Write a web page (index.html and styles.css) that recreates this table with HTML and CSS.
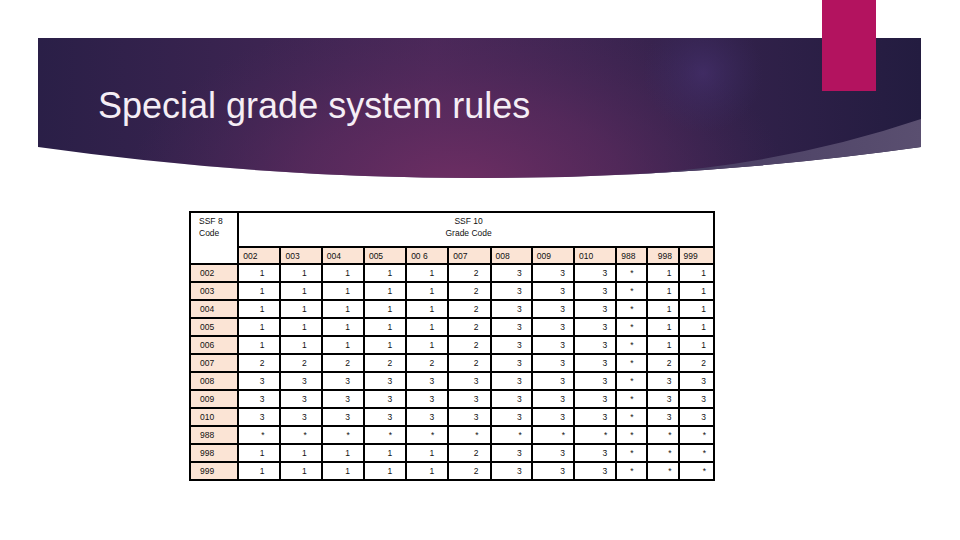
FILE: index.html
```html
<!DOCTYPE html>
<html>
<head>
<meta charset="utf-8">
<link rel="stylesheet" href="styles.css">
</head>
<body>
<div class="slide">
  <div class="accent"></div>
  <header class="banner">
    <svg class="banner-bg" width="883" height="140" viewBox="0 0 883 140" aria-hidden="true">
      <defs>
        <linearGradient id="base" x1="0" y1="0" x2="1" y2="0">
          <stop offset="0" stop-color="#2a1f47"/>
          <stop offset="0.45" stop-color="#4a2859"/>
          <stop offset="0.75" stop-color="#34224c"/>
          <stop offset="1" stop-color="#231c40"/>
        </linearGradient>
        <radialGradient id="mag" cx="420" cy="150" r="330" gradientUnits="userSpaceOnUse" gradientTransform="translate(420 150) scale(1 0.55) translate(-420 -150)">
          <stop offset="0" stop-color="#6e2e63" stop-opacity="1"/>
          <stop offset="0.5" stop-color="#5f2b5f" stop-opacity="0.6"/>
          <stop offset="1" stop-color="#4a2859" stop-opacity="0"/>
        </radialGradient>
        <radialGradient id="glow" cx="665" cy="35" r="60" gradientUnits="userSpaceOnUse">
          <stop offset="0" stop-color="#45306d" stop-opacity="0.7"/>
          <stop offset="1" stop-color="#3a2a60" stop-opacity="0"/>
        </radialGradient>
        <linearGradient id="wedge" x1="0" y1="0" x2="1" y2="0">
          <stop offset="0" stop-color="#453a60"/>
          <stop offset="1" stop-color="#5a4f70"/>
        </linearGradient>
        <clipPath id="shape">
          <path d="M0,0 H883 V109 Q442,171 0,109 Z"/>
        </clipPath>
      </defs>
      <g clip-path="url(#shape)">
        <rect width="883" height="140" fill="url(#base)"/>
        <rect width="883" height="140" fill="url(#mag)"/>
        <rect width="883" height="140" fill="url(#glow)"/>
        <path d="M883,81 Q750,126 600,136 L600,140 L883,140 Z" fill="url(#wedge)"/>
      </g>
    </svg>
    <h1 class="title">Special grade system rules</h1>
  </header>

  <table class="grades">
    <colgroup>
      <col class="c-code">
      <col class="c-w"><col class="c-w2"><col class="c-w"><col class="c-w"><col class="c-w"><col class="c-w"><col class="c-w2"><col class="c-w"><col class="c-w"><col class="c-n"><col class="c-n"><col class="c-n3">
    </colgroup>
    <tr class="r-top">
      <td class="head-left" rowspan="2">SSF 8<br>Code</td>
      <td class="head-span" colspan="12">SSF 10<br>Grade Code</td>
    </tr>
    <tr class="r-codes">
      <td class="code">002</td><td class="code">003</td><td class="code">004</td><td class="code">005</td><td class="code">00 6</td><td class="code">007</td><td class="code">008</td><td class="code">009</td><td class="code">010</td><td class="code">988</td><td class="code">998</td><td class="code">999</td>
    </tr>
    <tr><th>002</th><td>1</td><td>1</td><td>1</td><td>1</td><td>1</td><td>2</td><td>3</td><td>3</td><td>3</td><td>*</td><td>1</td><td>1</td></tr>
    <tr><th>003</th><td>1</td><td>1</td><td>1</td><td>1</td><td>1</td><td>2</td><td>3</td><td>3</td><td>3</td><td>*</td><td>1</td><td>1</td></tr>
    <tr><th>004</th><td>1</td><td>1</td><td>1</td><td>1</td><td>1</td><td>2</td><td>3</td><td>3</td><td>3</td><td>*</td><td>1</td><td>1</td></tr>
    <tr><th>005</th><td>1</td><td>1</td><td>1</td><td>1</td><td>1</td><td>2</td><td>3</td><td>3</td><td>3</td><td>*</td><td>1</td><td>1</td></tr>
    <tr><th>006</th><td>1</td><td>1</td><td>1</td><td>1</td><td>1</td><td>2</td><td>3</td><td>3</td><td>3</td><td>*</td><td>1</td><td>1</td></tr>
    <tr><th>007</th><td>2</td><td>2</td><td>2</td><td>2</td><td>2</td><td>2</td><td>3</td><td>3</td><td>3</td><td>*</td><td>2</td><td>2</td></tr>
    <tr><th>008</th><td>3</td><td>3</td><td>3</td><td>3</td><td>3</td><td>3</td><td>3</td><td>3</td><td>3</td><td>*</td><td>3</td><td>3</td></tr>
    <tr><th>009</th><td>3</td><td>3</td><td>3</td><td>3</td><td>3</td><td>3</td><td>3</td><td>3</td><td>3</td><td>*</td><td>3</td><td>3</td></tr>
    <tr><th>010</th><td>3</td><td>3</td><td>3</td><td>3</td><td>3</td><td>3</td><td>3</td><td>3</td><td>3</td><td>*</td><td>3</td><td>3</td></tr>
    <tr><th>988</th><td>*</td><td>*</td><td>*</td><td>*</td><td>*</td><td>*</td><td>*</td><td>*</td><td>*</td><td>*</td><td>*</td><td>*</td></tr>
    <tr><th>998</th><td>1</td><td>1</td><td>1</td><td>1</td><td>1</td><td>2</td><td>3</td><td>3</td><td>3</td><td>*</td><td>*</td><td>*</td></tr>
    <tr><th>999</th><td>1</td><td>1</td><td>1</td><td>1</td><td>1</td><td>2</td><td>3</td><td>3</td><td>3</td><td>*</td><td>*</td><td>*</td></tr>
  </table>
</div>
</body>
</html>
```

FILE: styles.css
```css
html, body {
  margin: 0;
  padding: 0;
  background: #ffffff;
}

.slide {
  position: relative;
  width: 960px;
  height: 540px;
  overflow: hidden;
  padding-top: 38px;
  box-sizing: border-box;
  font-family: "Liberation Sans", Arial, sans-serif;
}

.accent {
  position: absolute;
  left: 822px;
  top: 0;
  width: 54px;
  height: 91px;
  background: #b3135f;
  z-index: 2;
}

.banner {
  position: relative;
  margin-left: 38px;
  width: 883px;
  height: 140px;
}

.banner-bg {
  position: absolute;
  left: 0;
  top: 0;
  display: block;
}

.title {
  position: relative;
  margin: 0;
  padding: 48px 0 0 60px;
  font-family: "Liberation Sans", Arial, sans-serif;
  font-weight: normal;
  font-size: 36px;
  line-height: 40px;
  color: #f5eef5;
}

.grades {
  margin: 33px 0 0 189px;
  border-collapse: collapse;
  table-layout: fixed;
  width: 526px;
  font-family: "Liberation Sans", Arial, sans-serif;
  font-size: 8.5px;
  line-height: 10px;
  color: #111;
}

.c-code { width: 48px; }
.c-w { width: 42px; }
.c-w2 { width: 41px; }
.c-n { width: 31px; }
.c-n3 { width: 35px; }

.grades td,
.grades th {
  border: 2px solid #000;
  padding: 3px 10px 0 0;
  height: 18px;
  box-sizing: border-box;
  vertical-align: top;
  text-align: right;
  font-weight: normal;
  white-space: nowrap;
  overflow: hidden;
}

.grades th {
  background: #fbe4d5;
  text-align: left;
  padding-left: 9px;
  padding-right: 0;
}

.r-top td {
  height: 35px;
}

.grades .head-left {
  background: #fff;
  text-align: left;
  padding: 2px 0 0 8px;
  line-height: 12px;
}

.grades .head-span {
  background: #fff;
  text-align: center;
  padding: 2px 0 0 0;
  line-height: 12px;
}

.r-codes td {
  height: 17px;
}

.grades .code {
  background: #fbe4d5;
  text-align: left;
  padding: 3px 0 0 4px;
}

.grades tr td:nth-child(2) { padding-right: 15px; }
.grades tr td:nth-child(3) { padding-right: 14px; }
.grades tr td:nth-child(4),
.grades tr td:nth-child(5),
.grades tr td:nth-child(6) { padding-right: 13px; }
.grades tr td:nth-child(7) { padding-right: 11px; }
.grades tr td:nth-child(8) { padding-right: 9px; }
.grades tr td:nth-child(9),
.grades tr td:nth-child(10) { padding-right: 8px; }
.grades tr td:nth-child(11) { padding-right: 0; text-align: center; }
.grades tr td:nth-child(12) { padding-right: 6px; }
.grades tr td:nth-child(13) { padding-right: 7px; }
```
